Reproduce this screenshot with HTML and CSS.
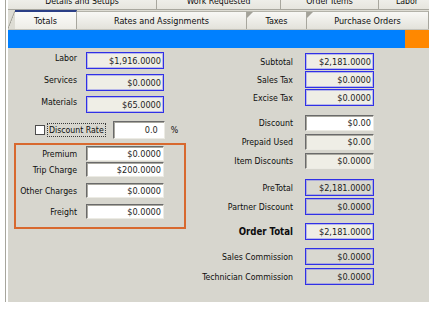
FILE: index.html
```html
<!DOCTYPE html>
<html lang="en">
<head>
  <meta charset="UTF-8">
  <title>Work Order Totals</title>
  <link rel="stylesheet" href="styles.css">
</head>
<body>
  <div class="frame">
    <div class="sheet">
      <div class="tabs tabs-back">
        <div class="tab w-details">Details and Setups</div>
        <div class="tab w-work">Work Requested</div>
        <div class="tab w-items">Order Items</div>
        <div class="tab w-labor">Labor</div>
      </div>
      <div class="tabs tabs-front">
        <div class="tab-lead"></div>
        <div class="tab active w-totals">Totals</div>
        <div class="tab w-rates">Rates and Assignments</div>
        <div class="tab ear w-taxes">Taxes</div>
        <div class="tab ear w-po">Purchase Orders</div>
      </div>
      <div class="band"><span class="band-flag"></span></div>

      <div class="totals">
        <div class="col-left">
          <div class="group wide">
            <div class="row"><span class="lbl lift">Labor</span><span class="fld calc">$1,916.0000</span></div>
            <div class="row"><span class="lbl lift">Services</span><span class="fld calc">$0.0000</span></div>
            <div class="row"><span class="lbl lift">Materials</span><span class="fld calc">$65.0000</span></div>
          </div>

          <div class="discount-rate">
            <span class="check"></span>
            <span class="focus">Discount Rate</span>
            <span class="fld edit rate">0.0</span>
            <span class="pct">%</span>
          </div>

          <div class="charges">
            <div class="row"><span class="lbl">Premium</span><span class="fld edit">$0.0000</span></div>
            <div class="row r-trip"><span class="lbl">Trip Charge</span><span class="fld edit">$200.0000</span></div>
            <div class="row r-other"><span class="lbl">Other Charges</span><span class="fld edit">$0.0000</span></div>
            <div class="row r-other"><span class="lbl">Freight</span><span class="fld edit">$0.0000</span></div>
          </div>
        </div>

        <div class="col-right">
          <div class="group g-sub">
            <div class="row"><span class="lbl">Subtotal</span><span class="fld calc">$2,181.0000</span></div>
            <div class="row"><span class="lbl">Sales Tax</span><span class="fld calc">$0.0000</span></div>
            <div class="row"><span class="lbl">Excise Tax</span><span class="fld calc">$0.0000</span></div>
          </div>
          <div class="group loose g-disc">
            <div class="row"><span class="lbl">Discount</span><span class="fld edit">$0.00</span></div>
            <div class="row"><span class="lbl">Prepaid Used</span><span class="fld edit ro">$0.00</span></div>
            <div class="row"><span class="lbl">Item Discounts</span><span class="fld edit ro">$0.0000</span></div>
          </div>
          <div class="group g-pre">
            <div class="row"><span class="lbl">PreTotal</span><span class="fld calc dim">$2,181.0000</span></div>
            <div class="row"><span class="lbl">Partner Discount</span><span class="fld calc dim">$0.0000</span></div>
          </div>
          <div class="group g-total">
            <div class="row"><span class="lbl big">Order Total</span><span class="fld calc">$2,181.0000</span></div>
          </div>
          <div class="group loose g-comm">
            <div class="row"><span class="lbl">Sales Commission</span><span class="fld calc dim">$0.0000</span></div>
            <div class="row"><span class="lbl">Technician Commission</span><span class="fld calc dim">$0.0000</span></div>
          </div>
        </div>
      </div>
    </div>
  </div>
</body>
</html>
```

FILE: styles.css
```css
body {
  margin: 0;
  background: #fff;
  font-family: "DejaVu Sans Condensed", "DejaVu Sans", sans-serif;
  font-stretch: condensed;
  font-size: 8.7px;
  color: #0d0d0d;
}

.frame {
  margin-left: 5px;
  width: 424px;
  height: 302px;
  border-left: 1px solid #a7a69d;
  padding-left: 2px;
  box-sizing: border-box;
}

.sheet {
  background: #d7d6ce;
  height: 302px;
  overflow: hidden;
}

/* tab strips */
.tabs {
  display: flex;
  align-items: flex-end;
  background: #dddcd4;
}

.tab {
  flex: none;
  box-sizing: border-box;
  text-align: center;
  white-space: nowrap;
  border-right: 1px solid #a8a79e;
  position: relative;
}

.tabs-back {
  height: 10px;
  overflow: hidden;
}

.tabs-back .tab {
  height: 16px;
  line-height: 14px;
  border-bottom: 1px solid #a8a79e;
  background: linear-gradient(#f4f4f0, #e6e5de);
}

.tabs-front {
  height: 20px;
  border-bottom: 1px solid #c4c3bb;
  box-sizing: border-box;
  font-size: 9px;
}

.tabs-front .tab {
  height: 18px;
  line-height: 19px;
  border-top: 1px solid #b3b2a9;
  background: linear-gradient(#f8f8f5, #e3e2db);
}

.tabs-front .tab.active {
  height: 19px;
  line-height: 18px;
  border-top: 2px solid #2b3f86;
  background: linear-gradient(#fbfbf9, #eeede7);
}

.tab.ear::before {
  content: "";
  position: absolute;
  top: 0;
  left: 0;
  border-top: 6px solid #a3a299;
  border-right: 6px solid transparent;
}

.tab-lead {
  width: 7px;
  height: 18px;
  flex: none;
  background: linear-gradient(to top left, transparent 46%, #9d9c93 50%, transparent 58%);
}

.w-details { width: 149px; }
.w-work { width: 124px; }
.w-items { width: 98px; }
.w-labor { width: 57px; }
.w-totals { width: 62px; }
.w-rates { width: 170px; }
.w-taxes { width: 60px; }
.w-po { width: 122px; }

.band {
  height: 18px;
  background: #0080ff;
  display: flex;
  justify-content: flex-end;
}

.band-flag {
  width: 24px;
  background: #ff8800;
}

/* totals form */
.totals {
  display: flex;
}

.col-left {
  width: 178px;
  flex: none;
}

.col-right {
  margin-left: 9px;
}

.group {
  display: flex;
  flex-direction: column;
  gap: 1px;
}

.group.loose { gap: 3px; }
.group.wide { gap: 5px; margin-top: 4px; }

.g-sub { margin-top: 5px; }
.g-disc { margin-top: 9px; }
.g-pre { margin-top: 10px; gap: 2px; }
.g-total { margin-top: 8px; }
.g-comm { margin-top: 8px; }

.row {
  display: grid;
  align-items: center;
}

.col-left .row {
  grid-template-columns: 69px 78px;
  column-gap: 9px;
}

.col-right .row {
  grid-template-columns: 98px 69px;
  column-gap: 12px;
}

.lbl {
  text-align: right;
  white-space: nowrap;
}

.lbl.lift {
  padding-bottom: 5px;
}

.lbl.big {
  font-weight: bold;
  font-size: 9.6px;
}

.fld {
  display: flex;
  align-items: center;
  justify-content: flex-end;
  box-sizing: border-box;
  padding-right: 2px;
  font-size: 9.1px;
  color: #1c1c1c;
}

.fld.calc {
  height: 17px;
  border: 1px solid #3030e6;
  box-shadow: inset 0 0 0 1px rgba(100, 100, 235, 0.4);
  background: #efeee6;
}

.fld.calc.dim {
  background: #d9d8d0;
}

.fld.edit {
  height: 16px;
  background: #fff;
  border: 1px solid;
  border-color: #6a6a6a #ecebe4 #ecebe4 #6a6a6a;
  box-shadow: inset 1px 1px 0 #a9a8a0;
}

.fld.edit.ro {
  background: #efeee6;
}

.discount-rate {
  display: flex;
  align-items: center;
  margin-top: 8px;
  padding-left: 27px;
  height: 18px;
}

.check {
  width: 10px;
  height: 10px;
  box-sizing: border-box;
  border: 1px solid #4d4d4d;
  background: #fff;
}

.focus {
  margin-left: 2px;
  padding: 1px 1px;
  border: 1px dotted #3a3a3a;
}

.fld.rate {
  width: 52px;
  height: 18px;
  margin-left: 7px;
  padding-right: 6px;
}

.pct {
  margin-left: 6px;
}

.charges {
  margin: 4px 0 0 6px;
  width: 172px;
  height: 86px;
  box-sizing: border-box;
  border: 2px solid #d8692f;
  padding-top: 1px;
}

.col-left .charges .row {
  grid-template-columns: 61px 78px;
}

.charges .fld.edit {
  height: 15px;
}

.r-trip { margin-top: 1px; }
.r-other { margin-top: 6px; }
```
